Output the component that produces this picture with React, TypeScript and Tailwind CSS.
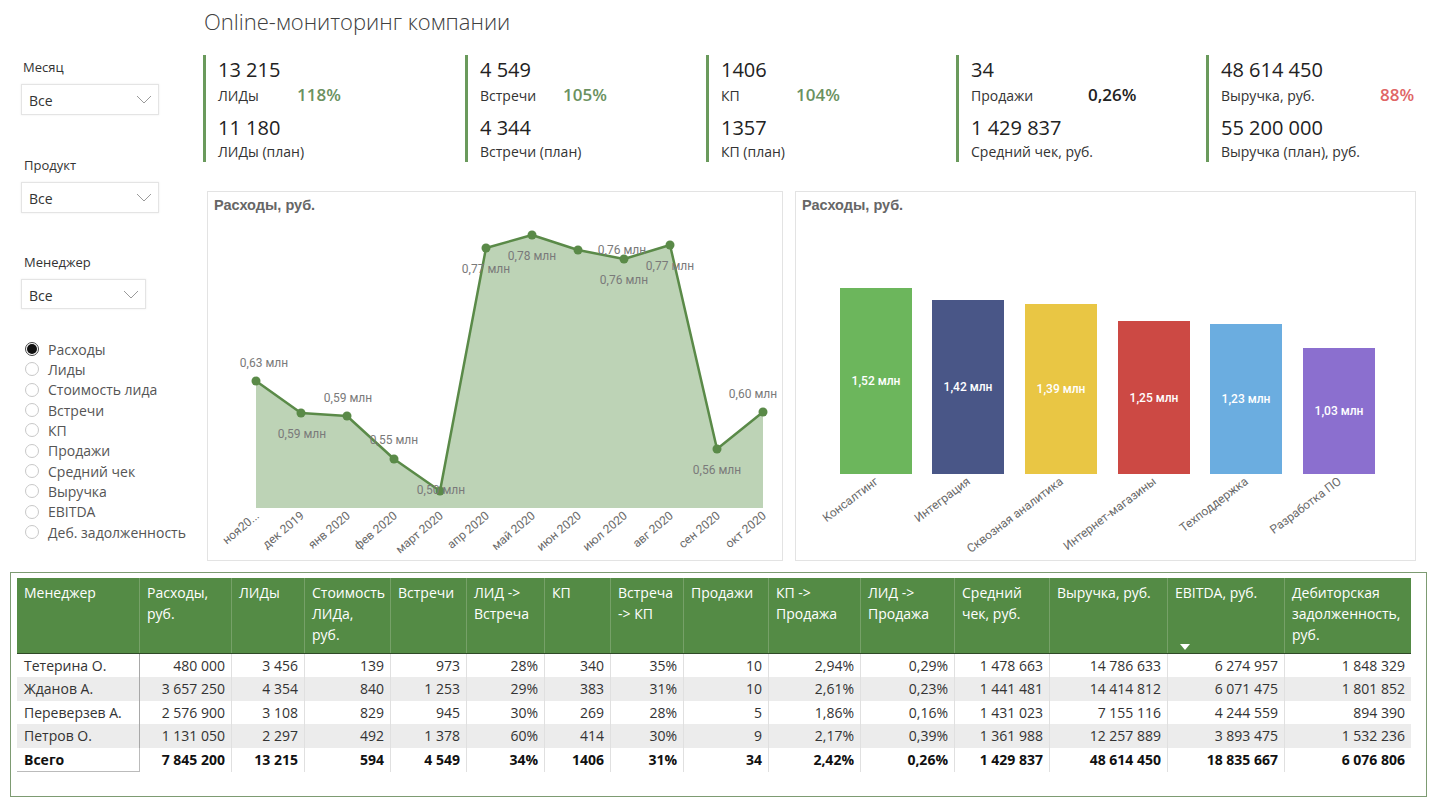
import React from "react";

const kpis = [
  { w: "w-[262px]", v1: "13 215", l1: "ЛИДы", pct: "118%", pw: "w-[79px]", pc: "text-[#6b9160]", v2: "11 180", l2: "ЛИДы (план)" },
  { w: "w-[241px]", v1: "4 549", l1: "Встречи", pct: "105%", pw: "w-[83px]", pc: "text-[#6b9160]", v2: "4 344", l2: "Встречи (план)" },
  { w: "w-[250px]", v1: "1406", l1: "КП", pct: "104%", pw: "w-[75px]", pc: "text-[#6b9160]", v2: "1357", l2: "КП (план)" },
  { w: "w-[250px]", v1: "34", l1: "Продажи", pct: "0,26%", pw: "w-[117px]", pc: "text-[#222]", v2: "1 429 837", l2: "Средний чек, руб." },
  { w: "w-[227px]", v1: "48 614 450", l1: "Выручка, руб.", pct: "88%", pw: "w-[159px]", pc: "text-[#e06666]", v2: "55 200 000", l2: "Выручка (план), руб." },
];

function Chevron() {
  return (
    <svg width="16" height="9" viewBox="0 0 16 9" fill="none">
      <path d="M1 1 L8 8 L15 1" stroke="#9a9a9a" strokeWidth="1" />
    </svg>
  );
}

function Dropdown({ w, h }: { w: string; h: string }) {
  return (
    <div className={`${w} ${h} border border-[#e4e4e4] shadow-[0_0_2px_rgba(0,0,0,0.08)] flex items-center justify-between pl-[7px] pr-[6px] text-[14px] text-[#333]`}>
      <span className="pt-[2px]">Все</span>
      <Chevron />
    </div>
  );
}

const radios = ["Расходы", "Лиды", "Стоимость лида", "Встречи", "КП", "Продажи", "Средний чек", "Выручка", "EBITDA", "Деб. задолженность"];

const linePts: [number, number][] = [
  [48, 189], [93, 221], [139, 224], [186, 267], [232, 299], [278, 56],
  [324, 43], [370, 58], [416, 67], [462, 53], [509, 257], [555, 220],
];
const months = ["ноя20...", "дек 2019", "янв 2020", "фев 2020", "март 2020", "апр 2020", "май 2020", "июн 2020", "июл 2020", "авг 2020", "сен 2020", "окт 2020"];
const lineLabels: [string, number, number][] = [
  ["0,63 млн", 56, 175],
  ["0,59 млн", 94, 246],
  ["0,59 млн", 140, 210],
  ["0,55 млн", 186, 252],
  ["0,50 млн", 233, 302],
  ["0,77 млн", 278, 81],
  ["0,78 млн", 324, 68],
  ["0,76 млн", 414, 62],
  ["0,76 млн", 416, 92],
  ["0,77 млн", 462, 78],
  ["0,56 млн", 509, 282],
  ["0,60 млн", 545, 206],
];

function LineChart() {
  const base = 316;
  const line = linePts.map((p) => p.join(",")).join(" ");
  const area = `${linePts[0][0]},${base} ${line} ${linePts[linePts.length - 1][0]},${base}`;
  return (
    <svg className="w-[574px] h-[342px]" viewBox="0 26 574 342">
      <polygon points={area} fill="#bdd3b6" />
      <polyline points={line} fill="none" stroke="#5a8a48" strokeWidth="2.5" strokeLinejoin="round" />
      {linePts.map((p, i) => (
        <circle key={i} cx={p[0]} cy={p[1]} r="4.5" fill="#5a8a48" />
      ))}
      {lineLabels.map(([t, x, y], i) => (
        <text key={i} x={x} y={y} textAnchor="middle" fontSize="12" fill="#7a7a7a" fontFamily="Roboto, sans-serif">
          {t}
        </text>
      ))}
      {months.map((m, i) => (
        <text
          key={m}
          transform={`translate(${linePts[i][0] + 4},${325}) rotate(-40)`}
          textAnchor="end"
          fontSize="12"
          fill="#6a6a6a"
          fontFamily="Roboto, sans-serif"
        >
          {m}
        </text>
      ))}
    </svg>
  );
}

const bars = [
  { name: "Консалтинг", x: 44, top: 96, c: "#6cb65c", v: "1,52 млн" },
  { name: "Интеграция", x: 136, top: 108, c: "#495687", v: "1,42 млн" },
  { name: "Сквозная аналитика", x: 229, top: 112, c: "#e9c644", v: "1,39 млн" },
  { name: "Интернет-магазины", x: 322, top: 129, c: "#cc4944", v: "1,25 млн" },
  { name: "Техподдержка", x: 414, top: 132, c: "#6badE0", v: "1,23 млн" },
  { name: "Разработка ПО", x: 507, top: 156, c: "#8b6fcf", v: "1,03 млн" },
];

function BarChart() {
  const base = 282;
  return (
    <svg className="w-[619px] h-[342px]" viewBox="0 26 619 342">
      {bars.map((b) => {
        const cx = b.x + 36;
        return (
          <g key={b.name}>
            <rect x={b.x} y={b.top} width="72" height={base - b.top} fill={b.c} />
            <text x={cx} y={(b.top + base) / 2 + 4} textAnchor="middle" fontSize="12" fontWeight="500" fill="#ffffff" fontFamily="Roboto, sans-serif">
              {b.v}
            </text>
            <text
              transform={`translate(${cx + 3},${291}) rotate(-37)`}
              textAnchor="end"
              fontSize="12"
              fill="#6a6a6a"
              fontFamily="Roboto, sans-serif"
            >
              {b.name}
            </text>
          </g>
        );
      })}
    </svg>
  );
}

const headerLines: string[][] = [
  ["Менеджер"],
  ["Расходы,", "руб."],
  ["ЛИДы"],
  ["Стоимость", "ЛИДа,", "руб."],
  ["Встречи"],
  ["ЛИД ->", "Встреча"],
  ["КП"],
  ["Встреча", "-> КП"],
  ["Продажи"],
  ["КП ->", "Продажа"],
  ["ЛИД ->", "Продажа"],
  ["Средний", "чек, руб."],
  ["Выручка, руб."],
  ["EBITDA, руб."],
  ["Дебиторская", "задолженность,", "руб."],
];

const rows: string[][] = [
  ["Тетерина О.", "480 000", "3 456", "139", "973", "28%", "340", "35%", "10", "2,94%", "0,29%", "1 478 663", "14 786 633", "6 274 957", "1 848 329"],
  ["Жданов А.", "3 657 250", "4 354", "840", "1 253", "29%", "383", "31%", "10", "2,61%", "0,23%", "1 441 481", "14 414 812", "6 071 475", "1 801 852"],
  ["Переверзев А.", "2 576 900", "3 108", "829", "945", "30%", "269", "28%", "5", "1,86%", "0,16%", "1 431 023", "7 155 116", "4 244 559", "894 390"],
  ["Петров О.", "1 131 050", "2 297", "492", "1 378", "60%", "414", "30%", "9", "2,17%", "0,39%", "1 361 988", "12 257 889", "3 893 475", "1 532 236"],
  ["Всего", "7 845 200", "13 215", "594", "4 549", "34%", "1406", "31%", "34", "2,42%", "0,26%", "1 429 837", "48 614 450", "18 835 667", "6 076 806"],
];

const gridCols = "grid grid-cols-[123px_92px_73px_86px_76px_78px_66px_73px_85px_92px_94px_95px_118px_117px_126px]";

function Table() {
  return (
    <div className="ml-[10px] mt-[11px] w-[1417px] h-[225px] border-[1.5px] border-[#7d9b72] pl-[6px] pt-[5px]">
      <div className={`${gridCols} w-[1394px] bg-[#548b45] h-[76px] border-b border-[#2f4a28]`}>
        {headerLines.map((ls, i) => (
          <div key={i} className={`flex flex-col pl-[7px] pt-[4px] text-white text-[14px] leading-[21px] ${i < headerLines.length - 1 ? "border-r border-[#76a168]" : ""}`}>
            {ls.map((l) => (
              <span key={l} className="whitespace-nowrap">{l}</span>
            ))}
            {i === 13 && (
              <div className="mt-auto mb-[3px] ml-[5px] w-0 h-0 border-l-[5px] border-r-[5px] border-t-[6px] border-l-transparent border-r-transparent border-t-white" />
            )}
          </div>
        ))}
      </div>
      {rows.map((r, ri) => {
        const total = ri === 4;
        const bg = ri === 1 || ri === 3 ? "bg-[#ececec]" : "bg-white";
        return (
          <div key={ri} className={`${gridCols} w-[1394px] h-[23.4px] ${bg} ${total ? "font-bold text-[#111]" : "text-[#333]"}`}>
            {r.map((c, ci) => (
              <div
                key={ci}
                className={`text-[14px] leading-[23px] whitespace-nowrap ${ci === 0 ? "pl-[7px] border-r border-[#a8a8a8]" : "text-right pr-[6px]"} ${ci > 0 && ci < r.length - 1 ? "border-r border-[#e0e0e0]" : ""} ${total && ci === 0 ? "border-b border-[#bbbbbb]" : ""}`}
              >
                {c}
              </div>
            ))}
          </div>
        );
      })}
    </div>
  );
}

export default function App() {
  return (
    <div className="w-[1433px] h-[803px] bg-white overflow-hidden font-['Open_Sans',sans-serif] text-[#333]">
      <div className="flex h-[561px]">
        {/* Sidebar */}
        <div className="w-[203px] shrink-0 pl-[21px] pt-[58px] flex flex-col">
          <div className="ml-[2px] text-[13px] leading-[18px] text-[#333]">Месяц</div>
          <div className="mt-[8px]"><Dropdown w="w-[138px]" h="h-[31px]" /></div>
          <div className="ml-[3px] mt-[41px] text-[13px] leading-[18px] text-[#333]">Продукт</div>
          <div className="mt-[8px]"><Dropdown w="w-[138px]" h="h-[31px]" /></div>
          <div className="ml-[3px] mt-[40px] text-[13px] leading-[18px] text-[#333]">Менеджер</div>
          <div className="mt-[8px]"><Dropdown w="w-[125px]" h="h-[30px]" /></div>
          <div className="mt-[30px] ml-[4px] flex flex-col">
            {radios.map((r, i) => (
              <div key={r} className="h-[20.33px] flex items-center gap-[9px]">
                {i === 0 ? (
                  <div className="w-[14px] h-[14px] rounded-full border border-[#444] flex items-center justify-center">
                    <div className="w-[10px] h-[10px] rounded-full bg-[#111]" />
                  </div>
                ) : (
                  <div className="w-[14px] h-[14px] rounded-full border border-[#c8c8c8]" />
                )}
                <span className="text-[14px] text-[#555] whitespace-nowrap">{r}</span>
              </div>
            ))}
          </div>
        </div>

        {/* Main */}
        <div className="flex-1 pt-[7px] flex flex-col">
          <div className="h-[28px] leading-[28px] text-[22px] font-light text-[#404040] pl-[1px]">Online-мониторинг компании</div>
          <div className="mt-[20px] flex h-[107px]">
            {kpis.map((k) => (
              <div key={k.l1} className={`${k.w} shrink-0`}>
                <div className="h-[107px] border-l-[3px] border-[#6a9a5c] pl-[12px] pt-[3px] flex flex-col">
                  <div className="h-[24px] leading-[24px] text-[20px] text-[#222]">{k.v1}</div>
                  <div className="mt-[3px] h-[20px] flex items-center">
                    <div className={`${k.pw} shrink-0 text-[14px] text-[#333] whitespace-nowrap`}>{k.l1}</div>
                    <div className={`text-[17px] font-semibold ${k.pc}`}>{k.pct}</div>
                  </div>
                  <div className="mt-[11px] h-[24px] leading-[24px] text-[20px] text-[#222]">{k.v2}</div>
                  <div className="mt-[2px] h-[20px] leading-[20px] text-[14px] text-[#333] whitespace-nowrap">{k.l2}</div>
                </div>
              </div>
            ))}
          </div>
          <div className="mt-[29px] flex gap-[12px] ml-[4px] h-[370px]">
            <div className="w-[576px] h-[370px] border border-[#e3e3e3] flex flex-col">
              <div className="h-[26px] pl-[6px] pt-[3px] text-[14.5px] font-bold text-[#666] font-['Liberation_Sans',sans-serif]">Расходы, руб.</div>
              <LineChart />
            </div>
            <div className="w-[621px] h-[370px] border border-[#e3e3e3] flex flex-col">
              <div className="h-[26px] pl-[6px] pt-[3px] text-[14.5px] font-bold text-[#666] font-['Liberation_Sans',sans-serif]">Расходы, руб.</div>
              <BarChart />
            </div>
          </div>
        </div>
      </div>
      <Table />
    </div>
  );
}
